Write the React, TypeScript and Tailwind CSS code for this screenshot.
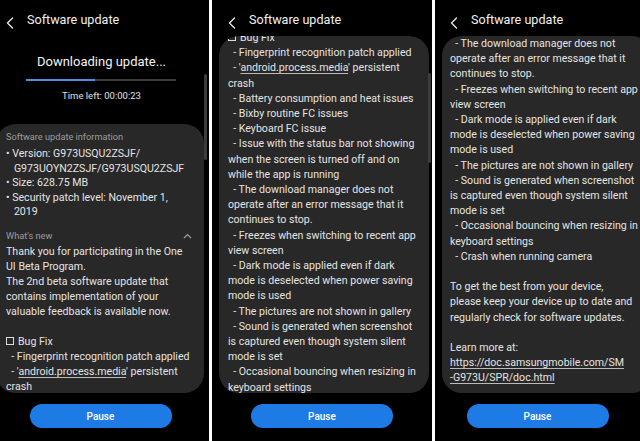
import React from "react";

const FONT = { fontFamily: "Roboto, 'Noto Sans', sans-serif" };

function Back() {
  return (
    <svg width="8" height="12" viewBox="0 0 8 12" className="shrink-0">
      <path d="M6.5 1 L1.5 6 L6.5 11" fill="none" stroke="#e8e8e8" strokeWidth="1.4" strokeLinecap="round" strokeLinejoin="round" />
    </svg>
  );
}

function Header({ pl }: { pl: string }) {
  return (
    <div className={`flex h-[36px] shrink-0 items-end pb-[7px] ${pl}`}>
      <Back />
      <span className="ml-[13px] text-[12.6px] leading-[18px] text-[#f0f0f0]">Software update</span>
    </div>
  );
}

function PauseBtn({ shift = "" }: { shift?: string }) {
  return (
    <div className={`flex h-[48px] shrink-0 items-start justify-center pt-[11px] ${shift}`}>
      <div className="flex h-[24px] w-[142px] items-center justify-center rounded-full bg-[#1e7be6] text-[10px] font-medium text-white">
        Pause
      </div>
    </div>
  );
}

function Box() {
  return <span className="mr-[4px] inline-block h-[8px] w-[8px] border border-[#dcdcdc] align-[-0px]" />;
}

function L({ children, cls = "" }: { children: React.ReactNode; cls?: string }) {
  return <div className={`whitespace-pre ${cls}`}>{children}</div>;
}

function Media() {
  return (
    <>
      {"  - '"}
      <span className="underline underline-offset-2 decoration-[#bbb]">android.process.media</span>
      {"' persistent"}
    </>
  );
}

function Panel1() {
  return (
    <div className="relative flex h-[441px] w-[209px] shrink-0 flex-col overflow-hidden bg-black">
      <Header pl="pl-[6px]" />
      <div className="mt-[17px] text-center text-[13px] leading-[18px] text-[#f2f2f2] pr-[6px]">Downloading update...</div>
      <div className="ml-[26px] mt-[8px] flex h-[2px] w-[150px] bg-[#3a3a3a]">
        <div className="h-[2px] w-[69px] bg-[#4a8fe0]" />
      </div>
      <div className="mt-[9px] text-center text-[9.5px] leading-[12px] text-[#e0e0e0] pr-[6px]">Time left: 00:00:23</div>
      <div className="mt-[22px] ml-[-4px] h-[269px] w-[208px] shrink-0 overflow-hidden rounded-[20px] bg-[#282828] pl-[10px] text-[10.6px] text-[#e4e4e4]">
        <div className="pt-[7px] text-[9.2px] leading-[12px] text-[#9c9c9c]">Software update information</div>
        <div className="mt-[4px] leading-[14.5px]">
          <L>• Version: G973USQU2ZSJF/</L>
          <L>{"   G973UOYN2ZSJF/G973USQU2ZSJF"}</L>
          <L>• Size: 628.75 MB</L>
          <L>• Security patch level: November 1,</L>
          <L>{"   2019"}</L>
        </div>
        <div className="mt-[10px] flex items-center justify-between pr-[12px] text-[9.2px] leading-[12px] text-[#9c9c9c]">
          <span>What's new</span>
          <svg width="9" height="6" viewBox="0 0 9 6">
            <path d="M1 5 L4.5 1.5 L8 5" fill="none" stroke="#9c9c9c" strokeWidth="1.2" />
          </svg>
        </div>
        <div className="mt-[2px] leading-[15.1px]">
          <L>Thank you for participating in the One</L>
          <L>UI Beta Program.</L>
          <L>The 2nd beta software update that</L>
          <L>contains implementation of your</L>
          <L>valuable feedback is available now.</L>
          <L> </L>
          <L><Box />Bug Fix</L>
          <L>{"  - Fingerprint recognition patch applied"}</L>
          <L><Media /></L>
          <L>crash</L>
        </div>
      </div>
      <div className="absolute left-[204px] top-[74px] h-[86px] w-[3px] rounded-full bg-[#3c3c3c]" />
      <PauseBtn shift="pr-[8px]" />
    </div>
  );
}

function Panel2() {
  return (
    <div className="relative flex h-[441px] w-[220px] shrink-0 flex-col overflow-hidden bg-black">
      <Header pl="pl-[16px]" />
      <div className="ml-[7px] h-[357px] w-[210px] shrink-0 overflow-hidden rounded-[20px] bg-[#282828] pl-[9px] text-[10.6px] leading-[15.2px] text-[#e4e4e4]">
        <div className="mt-[-6px]">
          <L><Box />Bug Fix</L>
          <L>{"  - Fingerprint recognition patch applied"}</L>
          <L><Media /></L>
          <L>crash</L>
          <L>{"  - Battery consumption and heat issues"}</L>
          <L>{"  - Bixby routine FC issues"}</L>
          <L>{"  - Keyboard FC issue"}</L>
          <L>{"  - Issue with the status bar not showing"}</L>
          <L>when the screen is turned off and on</L>
          <L>while the app is running</L>
          <L>{"  - The download manager does not"}</L>
          <L>operate after an error message that it</L>
          <L>continues to stop.</L>
          <L>{"  - Freezes when switching to recent app"}</L>
          <L>view screen</L>
          <L>{"  - Dark mode is applied even if dark"}</L>
          <L>mode is deselected when power saving</L>
          <L>mode is used</L>
          <L>{"  - The pictures are not shown in gallery"}</L>
          <L>{"  - Sound is generated when screenshot"}</L>
          <L>is captured even though system silent</L>
          <L>mode is set</L>
          <L>{"  - Occasional bouncing when resizing in"}</L>
          <L>keyboard settings</L>
        </div>
      </div>
      <div className="absolute left-[216px] top-[73px] h-[90px] w-[3px] rounded-full bg-[#3c3c3c]" />
      <PauseBtn />
    </div>
  );
}

function Panel3() {
  return (
    <div className="relative flex h-[441px] w-[205px] shrink-0 flex-col overflow-hidden bg-black">
      <Header pl="pl-[15px]" />
      <div className="ml-[7px] h-[357px] w-[210px] shrink-0 overflow-hidden rounded-[20px] bg-[#282828] pl-[8px] text-[10.6px] leading-[15.2px] text-[#e4e4e4]">
        <div className="mt-[0px]">
          <L>{"  - The download manager does not"}</L>
          <L>operate after an error message that it</L>
          <L>continues to stop.</L>
          <L>{"  - Freezes when switching to recent app"}</L>
          <L>view screen</L>
          <L>{"  - Dark mode is applied even if dark"}</L>
          <L>mode is deselected when power saving</L>
          <L>mode is used</L>
          <L>{"  - The pictures are not shown in gallery"}</L>
          <L>{"  - Sound is generated when screenshot"}</L>
          <L>is captured even though system silent</L>
          <L>mode is set</L>
          <L>{"  - Occasional bouncing when resizing in"}</L>
          <L>keyboard settings</L>
          <L>{"  - Crash when running camera"}</L>
          <L> </L>
          <L>To get the best from your device,</L>
          <L>please keep your device up to date and</L>
          <L>regularly check for software updates.</L>
          <L> </L>
          <L>Learn more at:</L>
          <L cls="underline underline-offset-2 decoration-[#bbb]">https://doc.samsungmobile.com/SM</L>
          <L><span className="underline underline-offset-2 decoration-[#bbb]">-G973U/SPR/doc.html</span></L>
        </div>
      </div>
      <PauseBtn />
    </div>
  );
}

export default function App() {
  return (
    <div className="flex h-[441px] w-[640px] overflow-hidden bg-white" style={FONT}>
      <Panel1 />
      <div className="w-[3px] shrink-0 bg-white" />
      <Panel2 />
      <div className="w-[3px] shrink-0 bg-white" />
      <Panel3 />
    </div>
  );
}
